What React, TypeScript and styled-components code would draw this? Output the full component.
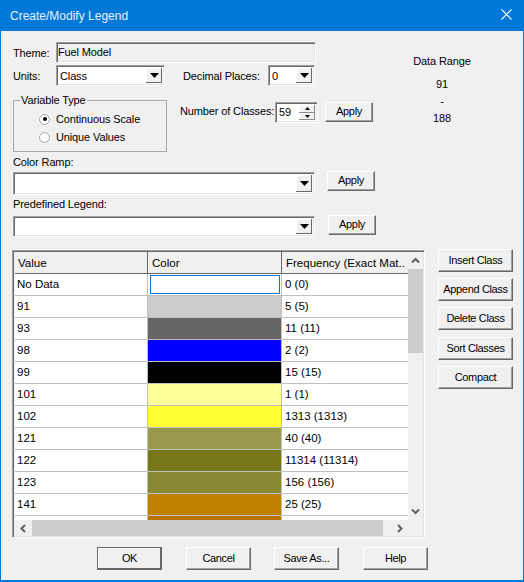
import React from "react";
import styled, { createGlobalStyle } from "styled-components";

const Global = createGlobalStyle`
  html, body { margin: 0; padding: 0; background: #f0f0f0; }
  * { box-sizing: border-box; }
  body { font-family: "Liberation Sans", Arial, sans-serif; font-size: 11px; letter-spacing: -0.13px; color: #000; }
`;

const Window = styled.div`
  width: 524px; height: 582px; display: flex; flex-direction: column;
  border: 1px solid #0078d7; border-top: 0; border-bottom-width: 2px; background: #f0f0f0; overflow: hidden;
`;
const TitleBar = styled.div`
  height: 31px; flex: none; background: #0078d7; color: #e8f2fb; display: flex; align-items: center;
  justify-content: space-between; padding: 0 12px 0 10px; font-size: 12px; letter-spacing: 0; margin: 0 -1px;
`;
const CloseIcon = styled.svg`width: 11px; height: 11px; margin-top: -2px;`;
const Content = styled.div`flex: 1; padding: 11px 0 0 12px; display: flex; flex-direction: column;`;
const Top = styled.div`display: flex;`;
const LeftColumn = styled.div`width: 372px; flex: none; display: flex; flex-direction: column;`;
const RightColumn = styled.div`
  width: 90px; margin-left: 12px; padding-top: 12px; display: flex; flex-direction: column; align-items: center; text-align: center;
`;
const RangeTitle = styled.div`height: 15px; line-height: 15px; white-space: nowrap;`;
const RangeValue = styled.div<{ $gap: number }>`height: 14px; line-height: 14px; margin-top: ${p => p.$gap}px;`;
const Row = styled.div<{ $top?: number }>`display: flex; align-items: center; margin-top: ${p => p.$top ?? 0}px;`;
const FieldLabel = styled.label<{ $width?: number; $left?: number }>`
  white-space: nowrap; ${p => p.$width ? `width: ${p.$width}px; flex: none;` : ""} margin-left: ${p => p.$left ?? 0}px;
`;
const sunken = `
  border: 1px solid; border-color: #a0a0a0 #fff #fff #a0a0a0;
  box-shadow: inset 1px 1px 0 #696969, inset -1px -1px 0 #e3e3e3;
`;
const ThemeInput = styled.div`
  ${sunken} width: 260px; height: 21px; padding: 2px 1px; line-height: 15px; background: #f0f0f0;
`;
const Select = styled.div<{ $width: number; $left?: number; $height?: number }>`
  ${sunken} width: ${p => p.$width}px; height: ${p => p.$height ?? 21}px; margin-left: ${p => p.$left ?? 0}px;
  background: #fff; flex: none; display: flex; padding: 2px; line-height: 15px;
`;
const SelectText = styled.div`flex: 1; padding: 1px;`;
const DropButton = styled.div`
  width: 16px; background: #f0f0f0; display: flex; align-items: center; justify-content: center;
  box-shadow: inset -1px -1px 0 #696969, inset 1px 1px 0 #fff;
`;
const Triangle = styled.svg`width: 9px; height: 5px;`;
const Group = styled.div`
  position: relative; width: 154px; height: 52px; border: 1px solid #a9a9a9; flex: none;
  padding: 11px 0 0 25px; display: flex; flex-direction: column; gap: 4px;
`;
const GroupTitle = styled.div`
  position: absolute; top: -8px; left: 6px; padding: 0 1px 0 1px; background: #f0f0f0; line-height: 14px;
`;
const RadioRow = styled.div`display: flex; align-items: center; height: 14px; gap: 6px;`;
const RadioDot = styled.span<{ $on?: boolean }>`
  width: 11px; height: 11px; border-radius: 50%; background: #fff; flex: none; display: flex; align-items: center; justify-content: center;
  border: 1px solid #a0a0a0; box-shadow: 0 0 0 1px #fafafa;
  &::after { content: ""; width: 4px; height: 4px; border-radius: 50%; background: ${p => p.$on ? "#000" : "transparent"}; }
`;
const ClassesBlock = styled.div`display: flex; align-items: flex-start; margin-left: 13px; padding-top: 2px; margin-bottom: auto;`;
const ClassesLabel = styled.label`white-space: nowrap; width: 95px; flex: none; padding-top: 3px;`;
const SpinBox = styled.div`${sunken} width: 43px; height: 21px; flex: none; background: #fff; display: flex; padding: 2px;`;
const SpinText = styled.div`flex: 1; padding-left: 1px; line-height: 15px;`;
const SpinButtons = styled.div`width: 16px; display: flex; flex-direction: column;`;
const SpinButton = styled.div`
  flex: 1; background: #f0f0f0; display: flex; align-items: center; justify-content: center;
  box-shadow: inset -1px -1px 0 #8a8a8a, inset 1px 1px 0 #fff;
`;
const SmallTriangle = styled.svg`width: 5px; height: 3px;`;
const Button = styled.button<{ $width: number; $height?: number; $left?: number; $default?: boolean; $top?: number }>`
  width: ${p => p.$width}px; height: ${p => p.$height ?? 23}px; flex: none; padding: 0 0 2px;
  margin-left: ${p => p.$left ?? 0}px; margin-top: ${p => p.$top ?? 0}px;
  font: inherit; letter-spacing: -0.35px; color: #000; background: #f0f0f0; white-space: nowrap; border-radius: 0;
  border: 1px solid; border-color: ${p => p.$default ? "#696969" : "#fff #696969 #696969 #fff"};
  box-shadow: ${p => p.$default
    ? "inset -1px -1px 0 #696969, inset 1px 1px 0 #fff"
    : "inset -1px -1px 0 #a0a0a0"};
`;
const SectionLabel = styled.div<{ $top: number }>`height: 14px; line-height: 14px; margin-top: ${p => p.$top}px;`;
const ComboRow = styled.div<{ $top: number }>`display: flex; align-items: flex-start; margin-top: ${p => p.$top}px;`;
const Middle = styled.div`display: flex; margin-top: 13px; margin-left: -1px; align-items: flex-start;`;
const Frame = styled.div`
  width: 413px; height: 288px; flex: none; padding: 1px 2px 1px 2px; display: flex; flex-direction: column; background: #f0f0f0;
  border: 1px solid; border-color: #a0a0a0 #fff #fff #a0a0a0; box-shadow: inset 1px 1px 0 #696969, inset -1px -1px 0 #e3e3e3;
`;
const FrameTop = styled.div`height: 268px; display: flex; flex: none;`;
const GridArea = styled.div`
  width: 393px; flex: none; overflow: hidden; background: #fff; display: grid;
  grid-template-columns: 133px 134px 126px; grid-auto-rows: 22px; font-size: 11.5px; letter-spacing: 0;
`;
const HeadCell = styled.div<{ $last?: boolean; $first?: boolean }>`
  background: #f0f0f0; border-bottom: 1px solid #696969; ${p => p.$last ? "" : "border-right: 1px solid #696969;"}
  padding: 0 0 0 ${p => p.$first ? 3 : 4}px; line-height: 22px; white-space: nowrap; overflow: hidden;
`;
const ValueCell = styled.div<{ $last?: boolean }>`
  border-bottom: 1px solid #c0c0c0; ${p => p.$last ? "" : "border-right: 1px solid #c0c0c0;"}
  padding-left: ${p => p.$last ? 3 : 2}px; line-height: 21px; white-space: nowrap; background: #fff;
`;
const ColorCell = styled.div<{ $color: string }>`
  border-bottom: 1px solid #c0c0c0; border-right: 1px solid #c0c0c0; background: ${p => p.$color};
`;
const EmptySwatch = styled.div`
  border-bottom: 1px solid #c0c0c0; border-right: 1px solid #c0c0c0; background: #fff; padding: 1px 1px 1px 2px; display: flex;
  &::before { content: ""; flex: 1; border: 1px solid #0078d7; }
`;
const VScroll = styled.div`width: 15px; flex: none; display: flex; flex-direction: column; background: #f0f0f0;`;
const VArrow = styled.div<{ $h: number }>`height: ${p => p.$h}px; flex: none; display: flex; align-items: center; justify-content: center;`;
const VThumb = styled.div`height: 84px; flex: none; background: #cdcdcd;`;
const VTrack = styled.div`flex: 1;`;
const HScroll = styled.div`height: 16px; width: 393px; flex: none; display: flex; background: #f0f0f0;`;
const HArrow = styled.div`width: 17px; flex: none; display: flex; align-items: center; justify-content: center;`;
const HThumb = styled.div`width: 351px; flex: none; background: #cdcdcd;`;
const HTrack = styled.div`flex: 1;`;
const Chevron = styled.svg`width: 9px; height: 9px;`;
const Side = styled.div`margin-left: 13px; margin-top: -1px; display: flex; flex-direction: column; gap: 6px;`;
const Footer = styled.div`display: flex; gap: 24px; margin-top: 9px; padding-left: 84px;`;

const rows: [string, string, string][] = [
  ["91", "#cccccc", "5 (5)"],
  ["93", "#666666", "11 (11)"],
  ["98", "#0000ff", "2 (2)"],
  ["99", "#000000", "15 (15)"],
  ["101", "#ffff99", "1 (1)"],
  ["102", "#ffff33", "1313 (1313)"],
  ["121", "#99994c", "40 (40)"],
  ["122", "#777719", "11314 (11314)"],
  ["123", "#888833", "156 (156)"],
  ["141", "#c08000", "25 (25)"],
  ["", "#b87400", ""],
];

const Down = () => (
  <Triangle viewBox="0 0 9 5"><path d="M0 0h9L4.5 5z" fill="#000" /></Triangle>
);
const Combo = ({ width, height, left, text }: { width: number; height?: number; left?: number; text?: string }) => (
  <Select $width={width} $height={height} $left={left}>
    <SelectText>{text}</SelectText>
    <DropButton><Down /></DropButton>
  </Select>
);
const Chev = ({ d }: { d: string }) => (
  <Chevron viewBox="0 0 9 9"><path d={d} fill="none" stroke="#606060" strokeWidth="2" /></Chevron>
);

export default function App() {
  return (
    <Window>
      <Global />
      <TitleBar>
        <span>Create/Modify Legend</span>
        <CloseIcon viewBox="0 0 11 11"><path d="M.5.5l10 10M10.5.5l-10 10" stroke="#fff" strokeWidth="1.1" fill="none" /></CloseIcon>
      </TitleBar>
      <Content>
        <Top>
          <LeftColumn>
            <Row>
              <FieldLabel $width={43}>Theme:</FieldLabel>
              <ThemeInput>Fuel Model</ThemeInput>
            </Row>
            <Row $top={2}>
              <FieldLabel $width={43}>Units:</FieldLabel>
              <Combo width={109} text="Class" />
              <FieldLabel $left={18} $width={85}>Decimal Places:</FieldLabel>
              <Combo width={47} text="0" />
            </Row>
            <Row $top={14}>
              <Group>
                <GroupTitle>Variable Type</GroupTitle>
                <RadioRow><RadioDot $on />Continuous Scale</RadioRow>
                <RadioRow><RadioDot />Unique Values</RadioRow>
              </Group>
              <ClassesBlock>
                <ClassesLabel>Number of Classes:</ClassesLabel>
                <SpinBox>
                  <SpinText>59</SpinText>
                  <SpinButtons>
                    <SpinButton><SmallTriangle viewBox="0 0 5 3"><path d="M2.5 0L5 3H0z" /></SmallTriangle></SpinButton>
                    <SpinButton><SmallTriangle viewBox="0 0 5 3"><path d="M0 0h5L2.5 3z" /></SmallTriangle></SpinButton>
                  </SpinButtons>
                </SpinBox>
                <Button $width={48} $height={20} $left={7}>Apply</Button>
              </ClassesBlock>
            </Row>
          </LeftColumn>
          <RightColumn>
            <RangeTitle>Data Range</RangeTitle>
            <RangeValue $gap={8}>91</RangeValue>
            <RangeValue $gap={3}>-</RangeValue>
            <RangeValue $gap={3}>188</RangeValue>
          </RightColumn>
        </Top>
        <SectionLabel $top={3}>Color Ramp:</SectionLabel>
        <ComboRow $top={3}>
          <Combo width={302} height={23} />
          <Button $width={48} $height={20} $left={12} $top={-1}>Apply</Button>
        </ComboRow>
        <SectionLabel $top={2}>Predefined Legend:</SectionLabel>
        <ComboRow $top={5}>
          <Combo width={302} height={21} />
          <Button $width={48} $height={20} $left={13} $top={-1}>Apply</Button>
        </ComboRow>
        <Middle>
          <Frame>
            <FrameTop>
              <GridArea>
                <HeadCell $first>Value</HeadCell>
                <HeadCell>Color</HeadCell>
                <HeadCell $last>Frequency (Exact Mat..</HeadCell>
                <ValueCell>No Data</ValueCell>
                <EmptySwatch />
                <ValueCell $last>0 (0)</ValueCell>
                {rows.map(([v, c, f], i) => (
                  <React.Fragment key={i}>
                    <ValueCell>{v}</ValueCell>
                    <ColorCell $color={c} />
                    <ValueCell $last>{f}</ValueCell>
                  </React.Fragment>
                ))}
              </GridArea>
              <VScroll>
                <VArrow $h={17}><Chev d="M1 6.5l3.5-3.5L8 6.5" /></VArrow>
                <VThumb />
                <VTrack />
                <VArrow $h={17}><Chev d="M1 2.5L4.5 6 8 2.5" /></VArrow>
              </VScroll>
            </FrameTop>
            <HScroll>
              <HArrow><Chev d="M6 1L2.5 4.5 6 8" /></HArrow>
              <HThumb />
              <HTrack />
              <HArrow><Chev d="M3 1l3.5 3.5L3 8" /></HArrow>
            </HScroll>
          </Frame>
          <Side>
            <Button $width={75}>Insert Class</Button>
            <Button $width={75}>Append Class</Button>
            <Button $width={75}>Delete Class</Button>
            <Button $width={75} $top={1}>Sort Classes</Button>
            <Button $width={75}>Compact</Button>
          </Side>
        </Middle>
        <Footer>
          <Button $width={65} $default>OK</Button>
          <Button $width={65}>Cancel</Button>
          <Button $width={65} $left={-1}>Save As...</Button>
          <Button $width={65}>Help</Button>
        </Footer>
      </Content>
    </Window>
  );
}
